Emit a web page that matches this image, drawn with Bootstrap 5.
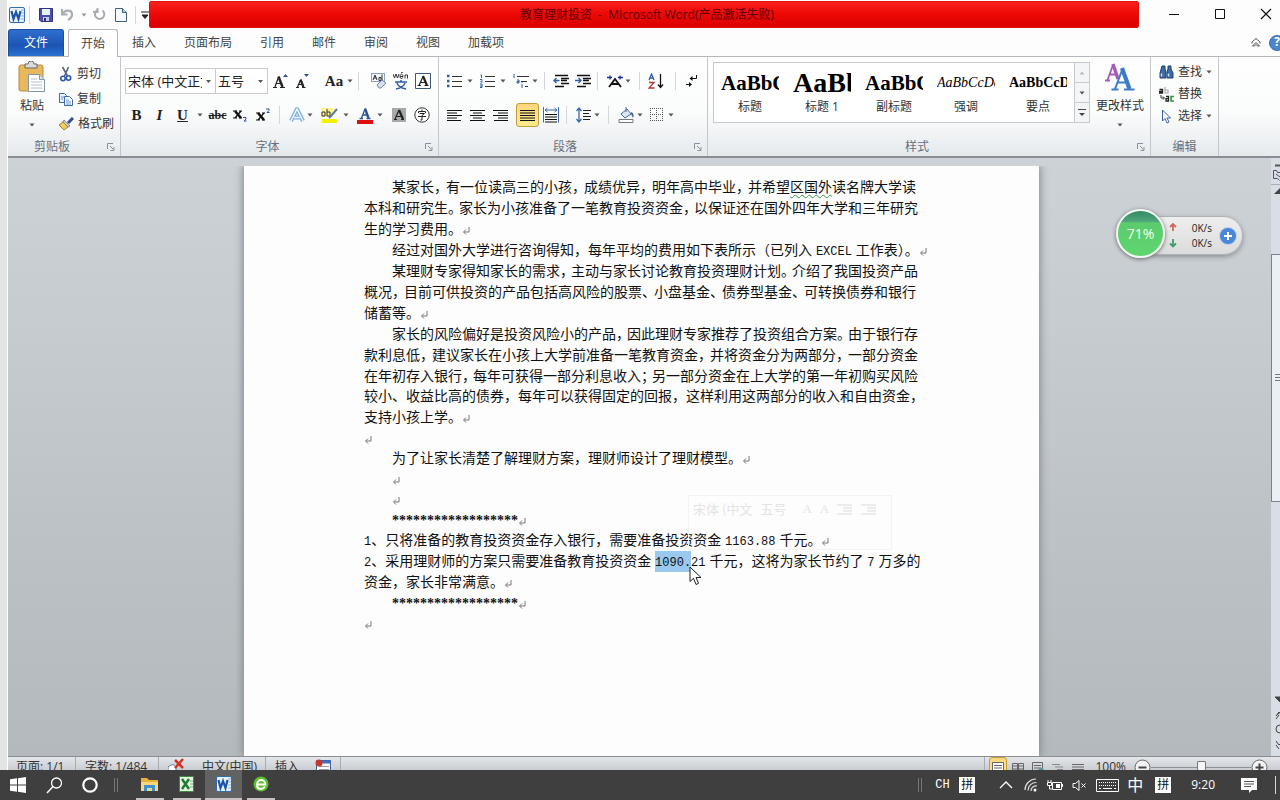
<!DOCTYPE html>
<html lang="zh-CN">
<head>
<meta charset="utf-8">
<meta name="viewport" content="width=device-width, initial-scale=1">
<title>教育理财投资 - Microsoft Word</title>
<link href="https://cdn.jsdelivr.net/npm/bootstrap@5.3.0/dist/css/bootstrap.min.css" rel="stylesheet">
<script src="https://cdn.jsdelivr.net/npm/bootstrap@5.3.0/dist/js/bootstrap.bundle.min.js" defer></script>
<style>
body{font:12px/16px "Open Sans","Noto Sans CJK SC",sans-serif;color:#333;background:#e3e5e5}
button{font:inherit;color:inherit;background:none;border:0;padding:0}
svg{display:block;flex:none}
.word-win{margin-left:7px;border-left:1px solid #fff;background:#fdfdfd;min-height:0}
.title-bar{height:29px}
.qat{width:141px;padding-left:1px}
.q24{width:22px;height:24px}
.q16{width:16px;height:24px}
.banner{height:27px;margin-top:1px;padding-left:6px;background:linear-gradient(#f8201c,#ee0a06 45%,#d90000);border:1px solid #e0100c;border-radius:2px;color:#5c0000;white-space:pre;line-height:26px}
.win-ctl{width:141px;padding-left:12px}
.win-ctl button{width:46px;height:28px;flex:none}
.tab-row{height:28px;border-bottom:1px solid #b4b8bc;color:#444}
.tab-row button{padding:0 14px;height:27px}
.tab-row .file-tab{padding:0;width:56px;margin-right:4px;color:#fff;background:linear-gradient(#2f6fcf,#1c54b4 60%,#2c72d2);border:1px solid #1c4ea0;border-bottom:0;border-radius:3px 3px 0 0}
.tab-row .home-tab{padding:0;width:50px;height:28px;background:#fff;border:1px solid #b4b8bc;border-bottom:0;border-radius:3px 3px 0 0}
.help-dot{width:16px;height:16px;border-radius:8px;background:#4a86cf;color:#fff;font-weight:700;margin-right:-5px;border:1px solid #3a6db0}
.ribbon{height:101px;background:linear-gradient(#fefefe,#fbfcfc 55%,#e6eaed);border-bottom:2px solid #8a8e94}
.grp{border-right:1px solid #c3c7cb}
.grp-clip{width:113px}.grp-font{width:318px}.grp-para{width:269px}.grp-style{width:443px}.grp-edit{width:68px}
.grp-name{height:18px;color:#67707c;position:relative;text-align:center;line-height:18px}
.launch{position:absolute;right:5px;top:5px}
.grp-body{height:81px}
.row-a{padding-top:12px;height:36px}
.row-b{margin-top:10px;height:24px}
.b12{width:12px;height:24px}.b22{width:22px;height:24px}.b24{width:23px;height:24px}
.b32{width:32px;height:24px;padding-left:4px;gap:2px}
.b34{width:34px;height:24px;padding-left:4px;gap:4px}
.vsep{width:1px;height:18px;background:#d3d6da;margin:0 5px 0 4px;flex:none}
.combo{appearance:none;height:26px;border:1px solid #c8ccd0;background:#fff url("data:image/svg+xml,%3Csvg xmlns='http://www.w3.org/2000/svg' width='5' height='3'%3E%3Cpath d='M0 0h5L2.5 3z' fill='%23555'/%3E%3C/svg%3E") no-repeat right 4px center;padding:0 13px 0 2px;font:inherit;font-size:13px;color:#222;border-radius:0}
.combo-face{width:91px}.combo-size{width:54px;margin-left:-1px;margin-right:2px}
.on{background:linear-gradient(#fbd77c,#ffe98f);border:1px solid #c29b3c;border-radius:3px}
.serif{font-family:"Liberation Serif",serif}
.glyph{font:700 15px/20px "Liberation Serif",serif;color:#222}
.glyph-sm{font-size:12px}
.gallery{width:377px;height:61px;margin:5px 0 0 5px;border:1px solid #c6cacd;background:#fff}
.gal-item{width:72px;padding:0 7px 7px;height:59px;color:#333}
.gal-item .demo{display:block;height:36px;overflow:hidden;white-space:nowrap;color:#000;font-family:"Liberation Serif",serif;font-weight:700;text-align:left;line-height:40px}
.d-md{font-size:21px}.d-lg{font-size:28px}.d-it{font-size:14px;font-style:italic}.gal-item .d-it{font-weight:400}.d-sm{font-size:14px}
.gal-scroll{width:15px;border-left:1px solid #c6cacd}
.gal-scroll button{height:20px;border-bottom:1px solid #c6cacd;background:#f4f5f6}
.gal-scroll button:last-child{border:0;height:19px}
.big-btn{line-height:18px;gap:4px}
.change-btn{width:60px}
.paste-btn{width:46px;margin-left:1px}
.list-btn{height:25px;gap:4px}
.find-btn{height:22px;gap:4px}
.workspace{min-height:0;background:linear-gradient(#ccd2d6,#c6cbd0 30%,#bcc1c5 65%,#b3b9bc)}
.doc-area{padding:8px 0 0 4px;min-height:0;overflow:hidden}
.sheet{width:795px;margin:0 auto;background:#fdfdfd;box-shadow:0 0 8px 1px #7f858a;padding:11px 120px;color:#111;font:14px/21px "Liberation Sans","Noto Sans CJK SC",sans-serif;clip-path:inset(0 -12px)}
.sheet p{margin:0;white-space:nowrap}
.ind{padding-left:28px}
.sheet .short{line-height:20px}
.p3,.p2,.p7{font-feature-settings:"halt"}
.p3{margin-right:4px}.p2{margin-right:5px}
.num{font:12px/12px "Liberation Mono",monospace}
.stars{font:700 14px/14px "Liberation Serif",serif}
.ret,.ret0{display:inline-block;vertical-align:-1px}
.wavy{text-decoration:underline wavy #3a9a4a 1px;text-underline-offset:2px}
.picked{position:relative;display:inline-block;background:#99c9ef;height:21px;vertical-align:top}
.pointer{position:absolute;left:34px;top:15px}
.mini-bar{position:absolute;left:33px;top:-56px;width:204px;height:55px;border:1px solid #f3f3f3;color:#e4e4e4;font:13px/26px "Noto Sans CJK SC",sans-serif}
.scroll-col{width:9px;overflow:hidden;background:#d8dee5}
.thumb{height:248px;background:#eaf0f5;border:1px solid #7c828a;border-right:0}
.speed{position:absolute;right:37px;top:209px;width:127px;height:50px}
.pill{position:absolute;left:24px;top:7px;width:103px;height:39px;border-radius:20px;background:linear-gradient(#eee,#dcdcdc);border:1px solid #aeb2b5;box-shadow:0 2px 5px #8d9296;padding:0 6px 0 28px;color:#222;font:10px/15px "Open Sans",sans-serif}
.ball{position:absolute;left:0;top:0;width:49px;height:49px;border-radius:25px;border:2px solid #f2f7f3;background:linear-gradient(#2f8a63,#53a77c 24%,#5bcb6c 26%,#5fd670);box-shadow:0 1px 4px #666;color:#f2fff2;font-size:14px}
.plus{width:16px;height:16px;border-radius:8px;background:#4a87d8;box-shadow:0 0 0 1px #b9cfea}
.status{height:14px;overflow:hidden;border-top:1px solid #8a8e94;background:linear-gradient(#e4e7ea,#c9cdd2);line-height:20px;color:#333}
.status>div{height:20px}
.status .cell{border-right:1px solid #a9adb2;padding:0 9px;height:20px;white-space:nowrap}
.cell.first{width:68px;padding-left:8px;padding-right:0}
.cell.words{width:83px;padding-right:0}
.cell.lang{width:107px;gap:17px}
.cell.ins{width:75px;gap:16px;padding-right:0}
.views{gap:2px;border-left:1px solid #a9adb2;padding-left:4px}
.views button{width:18px;height:20px;padding-top:3px}
.views .on{border-radius:3px 3px 0 0}
.zoom{appearance:none;width:100px;height:18px;margin:0;background:linear-gradient(#8b9096,#8b9096) no-repeat center/100% 1px}
.zoom::-webkit-slider-thumb{appearance:none;width:9px;height:12px;background:#f6f6f6;border:1px solid #777;border-radius:1px 1px 4px 4px}
.taskbar{height:30px;background:#3f3f3f;color:#fff}
.taskbar button{height:30px}
.app{width:37px;border-bottom:2px solid transparent;padding:0 4px;position:relative}
.app::after{content:"";position:absolute;left:5px;right:4px;bottom:-2px;height:2px;background:#c9c1c1}
.app.cur{background:#626262}.app.cur::after{left:0;right:0}
.tsep{margin:0 12px 0 5px}
.ime{width:16px;height:16px;background:#fff;color:#111;font-size:12px;line-height:15px;text-align:center}
.t24{width:24px}.t28{width:28px}.t32{width:32px}.t36{width:36px}
.clock{font:12px/30px "Open Sans",sans-serif}
</style>
</head>
<body class="vh-100 d-flex flex-column overflow-hidden">
<svg width="0" height="0" class="position-absolute" aria-hidden="true">
<symbol id="dn" viewBox="0 0 6 4"><path d="M.5.5h5L3 3.5z" fill="#555"/></symbol>
<symbol id="ret" viewBox="0 0 8 8"><path d="M7 0v5H2M4 2.500L1.500 5L4 7.500" fill="none" stroke="#777"/></symbol>
<symbol id="lau" viewBox="0 0 8 8"><path d="M.5 6V.5H6M3 3l3.500 3.500M7 4v3.500H3.500" fill="none" stroke="#8a9099"/></symbol>
<symbol id="wlogo" viewBox="0 0 16 16"><rect x=".5" y=".5" width="15" height="15" rx="1.500" fill="#e9f2fb" stroke="#2f6db4"/><path d="M12 3h3M12.500 6H15M12 9h3M12 12h3" stroke="#8fb3dc"/><path d="M2.500 4l2 8 2.500-7 2.500 7 2-8" fill="none" stroke="#1c55a5" stroke-width="2.200"/></symbol>
</svg>

<main class="word-win flex-grow-1 d-flex flex-column position-relative">
<header class="title-bar d-flex">
  <div class="qat d-flex align-items-center">
    <svg width="16" height="16"><use href="#wlogo"/></svg><span class="vsep"></span>
    <button class="q24 d-flex align-items-center justify-content-center" aria-label="保存"><svg width="14" height="14" viewBox="0 0 14 14"><path d="M.5.5h13v13H2L.5 12z" fill="#4a4fb0" stroke="#2f3184"/><path d="M3 1h8v6H3z" fill="#e8f1f8"/><path d="M4 9h6v4H4z" fill="#c9cde8"/><path d="M5 10h2v3H5z" fill="#2f3184"/></svg></button>
    <button class="q16 d-flex align-items-center ms-1" aria-label="撤消"><svg width="13" height="13" viewBox="0 0 13 13"><path d="M1 1v5.500h5.500M1.500 6C4 1.500 11 1.500 11 6.500c0 3-2 4.500-4 5.500" fill="none" stroke="#a9adb2" stroke-width="2.200"/></svg></button>
    <button class="b12 ms-1" aria-label="撤消列表"><svg width="6" height="4" opacity=".6"><use href="#dn"/></svg></button>
    <button class="q24 d-flex align-items-center" aria-label="重复"><svg width="13" height="13" viewBox="0 0 13 13"><path d="M3.500 2.500A4.700 4.700 0 1 0 9 2.300M8.500 0v4H13" fill="none" stroke="#a9adb2" stroke-width="2" transform="matrix(-1 0 0 1 13 0)"/></svg></button>
    <button aria-label="新建" class="me-2"><svg width="12" height="14" viewBox="0 0 12 14"><path d="M.5.5h7l4 4v9H.5z" fill="#f3f9fe" stroke="#44607e"/><path d="M7.500.5v4h4" fill="#b9d3ea" stroke="#44607e"/></svg></button>
    <span class="vsep ms-0"></span>
    <button aria-label="自定义快速访问工具栏"><svg width="8" height="8" viewBox="0 0 8 8"><path d="M0 1h8M1 4h6L4 7.500z" stroke="#222" fill="#222" stroke-width="1"/></svg></button>
  </div>
  <div class="banner flex-grow-1 text-center">教育理财投资  -  Microsoft Word(产品激活失败)</div>
  <div class="win-ctl d-flex">
    <button aria-label="最小化"><svg class="mx-auto" width="12" height="12"><path d="M1 6.500h10" stroke="#111"/></svg></button>
    <button aria-label="最大化"><svg class="mx-auto" width="12" height="12"><path d="M1.500 1.500h9v9h-9z" fill="none" stroke="#111"/></svg></button>
    <button aria-label="关闭"><svg class="mx-auto" width="12" height="12"><path d="M1 1l10 10M11 1L1 11" stroke="#111" stroke-width="1.200"/></svg></button>
  </div>
</header>

<nav class="tab-row d-flex">
  <button class="file-tab">文件</button><button class="home-tab">开始</button><button>插入</button><button>页面布局</button><button>引用</button><button>邮件</button><button>审阅</button><button>视图</button><button>加载项</button>
  <div class="ms-auto d-flex align-items-center gap-2">
    <svg width="10" height="9" viewBox="0 0 10 9"><path d="M1 5.500V4l4-3.500L9 4v1.500M1.500 8L5 4.500 8.500 8H6.500L5 6.500 3.500 8z" fill="none" stroke="#555"/></svg>
    <div class="help-dot text-center lh-1">?</div>
  </div>
</nav>

<section class="ribbon d-flex">
  <div class="grp grp-clip">
    <div class="grp-body d-flex">
      <button class="paste-btn big-btn d-flex flex-column align-items-center pt-1"><svg width="28" height="32" viewBox="0 0 28 32"><rect x="1" y="4" width="24" height="26" rx="2" fill="#e9b85c" stroke="#b98a3a"/><path d="M7 3h3a3 3 0 0 1 6 0h3v4H7z" fill="#d8dbe0" stroke="#666"/><path d="M10.500 13.500h11l5 5v12h-16z" fill="#fff" stroke="#8496a8"/><path d="M21.500 13.500v5h5" fill="#cfe0f0" stroke="#8496a8"/><path d="M13 18h6M13 21h11M13 24h11M13 27h11" stroke="#b4bcc8"/></svg><span>粘贴</span><svg class="mt-1" width="6" height="4"><use href="#dn"/></svg></button>
      <div class="d-flex flex-column pt-1 ms-1">
        <button class="list-btn d-flex align-items-center"><svg width="14" height="16" viewBox="0 0 14 16"><path d="M3.500 1l5 9M9.500 1l-4 9" stroke="#56657a" stroke-width="1.600"/><circle cx="4" cy="12.500" r="2.200" fill="none" stroke="#2b59ab" stroke-width="1.600"/><circle cx="9.500" cy="12" r="2.200" fill="none" stroke="#2b59ab" stroke-width="1.600"/></svg>剪切</button>
        <button class="list-btn d-flex align-items-center"><svg width="14" height="14" viewBox="0 0 14 14"><path d="M.5 1.500h5l2 2v7h-7z" fill="#e6f0fa" stroke="#3f69ad"/><path d="M5.500 4.500h5l3 3v6h-8z" fill="#fff" stroke="#3f69ad"/><path d="M7 8h3M7 10h5M7 12h5M2 5h3M2 7h2" stroke="#6d93c8"/></svg>复制</button>
        <button class="list-btn d-flex align-items-center"><svg width="15" height="14" viewBox="0 0 15 14"><path d="M14 1L9 6" stroke="#3b4c80" stroke-width="3"/><path d="M5 3l6 6-2 1-5-5z" fill="#c9cdd5" stroke="#555" stroke-width=".6"/><path d="M4 5l5 5-4 3L0 8z" fill="#f0cd62" stroke="#a98521"/></svg>格式刷</button>
      </div>
    </div>
    <div class="grp-name pe-4">剪贴板<svg class="launch" width="8" height="8"><use href="#lau"/></svg></div>
  </div>

  <div class="grp grp-font">
    <div class="grp-body px-1">
      <div class="row-a d-flex align-items-center">
        <select class="combo combo-face" aria-label="字体"><option>宋体 (中文正文)</option></select>
        <select class="combo combo-size" aria-label="字号"><option>五号</option></select>
        <button class="b24 d-flex align-items-center justify-content-center" aria-label="增大字体"><svg width="16" height="17" viewBox="0 0 16 17"><path d="M5.500 3.500L9.500 14" stroke="#222" stroke-width="2.400"/><path d="M2 14L5.500 4M3 10.500h5M0 14.500h4M7 14.500h5" fill="none" stroke="#222" stroke-width="1.200"/><path d="M10 4h5l-2.500-3z" fill="#2c4f95"/></svg></button>
        <button class="b22 d-flex align-items-center justify-content-center" aria-label="缩小字体"><svg width="15" height="17" viewBox="0 0 15 17"><path d="M5.500 6.500L8.500 14" stroke="#222" stroke-width="2.200"/><path d="M2.500 14L5.500 7M3.500 11.500h4M1 14.500h3M7 14.500h3.500" fill="none" stroke="#222" stroke-width="1.200"/><path d="M9 1h5l-2.500 3z" fill="#2c4f95"/></svg></button>
        <button class="b34 d-flex align-items-center ms-2 ps-1 gap-1" aria-label="更改大小写"><span class="glyph">Aa</span><svg width="6" height="4"><use href="#dn"/></svg></button>
        <span class="vsep"></span>
        <button class="b24 d-flex align-items-center justify-content-center ms-1" aria-label="清除格式"><svg width="16" height="16" viewBox="0 0 16 16"><rect x=".5" y=".5" width="13" height="8" fill="#f1f5fa" stroke="#8fa3c0"/><path d="M2 7l2-5 2 5M3 5h2.500M8 4.500h2v3H8zM11 1.500v6" fill="none" stroke="#333"/><path d="M6 12l5-5 4 3-5 5H8z" fill="#d5deea" stroke="#6d86ab"/></svg></button>
        <button class="b24 d-flex align-items-center justify-content-center" aria-label="拼音指南"><svg width="16" height="18" viewBox="0 0 16 18"><path d="M0 2l1.500 4L3 2l1.500 4L6 2M7 4.500h3c0-3-3-3-3 0s2 2 3 1M12 6.500V3h2.500v3.500M8 1l2-1" fill="none" stroke="#333"/><path d="M2 10h12M8 8v2M4 11c1 3 4 5 9 6M12 11c-1 3-4 5-9 6" fill="none" stroke="#2f5ca8" stroke-width="1.500"/></svg></button>
        <button class="b24 d-flex align-items-center justify-content-center" aria-label="字符边框"><svg width="16" height="16" viewBox="0 0 16 16"><path d="M.5.500h15v15H.5z" fill="#fff" stroke="#3d5577"/><path d="M8 3l4 9.500" stroke="#222" stroke-width="2.200"/><path d="M4 12.500L8 3.500M5.500 9.500h5M2.500 12.500h3.500M9.500 12.500h4" fill="none" stroke="#222" stroke-width="1.200"/></svg></button>
      </div>
      <div class="row-b d-flex align-items-center">
        <button class="b24 glyph">B</button><button class="b24 glyph fst-italic">I</button><button class="b24 glyph text-decoration-underline">U</button>
        <button class="b12" aria-label="下划线样式"><svg class="mx-auto" width="6" height="4"><use href="#dn"/></svg></button>
        <button class="b24 glyph glyph-sm text-decoration-line-through">abc</button>
        <button class="b24" aria-label="下标"><svg class="mx-auto" width="15" height="14" viewBox="0 0 15 14"><path d="M2 3l6 7" stroke="#111" stroke-width="2.600"/><path d="M8 3l-6 7M0 3h4M6 3h3M0 10h4M6 10h3" stroke="#111" stroke-width="1.200"/><path d="M10 9.500h3v1.500l-2 2h2.500" fill="none" stroke="#2c4f95"/></svg></button>
        <button class="b24" aria-label="上标"><svg class="mx-auto" width="15" height="14" viewBox="0 0 15 14"><path d="M2 5l6 7" stroke="#111" stroke-width="2.600"/><path d="M8 5l-6 7M0 5h4M6 5h3M0 12h4M6 12h3" stroke="#111" stroke-width="1.200"/><path d="M10 1h3v1.500l-2 2h2.500" fill="none" stroke="#2c4f95"/></svg></button>
        <span class="vsep"></span>
        <button class="b32 d-flex align-items-center" aria-label="文本效果"><svg width="16" height="16" viewBox="0 0 16 16"><path d="M2 14L8 2l6 12M5 10.500h6" fill="none" stroke="#7fb0dd" stroke-width="4" stroke-linejoin="round"/><path d="M2 14L8 2l6 12M5 10.500h6" fill="none" stroke="#eaf5fd" stroke-width="1.600"/></svg><svg width="6" height="4"><use href="#dn"/></svg></button>
        <button class="b32 d-flex align-items-center ps-0 gap-1 ms-1" aria-label="突出显示"><svg width="18" height="16" viewBox="0 0 18 16"><path d="M0 1h12v9H0z" fill="#fbf58a"/><path d="M1 8V5h3v4H1zM6 2v7h3V5H6" fill="none" stroke="#333"/><path d="M16 2l-6 7-2 2" fill="none" stroke="#5b79b4" stroke-width="2"/><path d="M1 12h15v4H1z" fill="#f6f000"/></svg><svg width="6" height="4"><use href="#dn"/></svg></button>
        <button class="b34 d-flex align-items-center" aria-label="字体颜色"><svg width="16" height="17" viewBox="0 0 16 17"><path d="M8 1.500L11.500 11" stroke="#2f539b" stroke-width="2.400"/><path d="M4.500 11L8 2M5.500 8h5M2.500 11.500h3.500M9.500 11.500h4" fill="none" stroke="#2f539b" stroke-width="1.300"/><path d="M0 13h16v4H0z" fill="#dc1010"/></svg><svg width="6" height="4"><use href="#dn"/></svg></button>
        <button class="b24" aria-label="字符底纹"><svg class="mx-auto" width="14" height="14" viewBox="0 0 14 14"><path d="M0 0h14v14H0z" fill="#a9a9a9"/><path d="M7 2l4 9" stroke="#222" stroke-width="2.200"/><path d="M3 11l4-9M4.500 8.500h5M2 11.500h3M9 11.500h3" fill="none" stroke="#222" stroke-width="1.200"/></svg></button>
        <button class="b24" aria-label="带圈字符"><svg class="mx-auto" width="16" height="16" viewBox="0 0 16 16"><circle cx="8" cy="8" r="7.200" fill="#fff" stroke="#333"/><path d="M8 2.500v1.500M4.500 6V4.500h7V6M5.500 6.500h5L8 8.500v4.500H6.500M4 9.500h8" fill="none" stroke="#222"/></svg></button>
      </div>
    </div>
    <div class="grp-name pe-4">字体<svg class="launch" width="8" height="8"><use href="#lau"/></svg></div>
  </div>

  <div class="grp grp-para">
    <div class="grp-body px-1">
      <div class="row-a d-flex align-items-center">
        <button class="b34 d-flex align-items-center" aria-label="项目符号"><svg width="16" height="14" viewBox="0 0 16 14"><path d="M0 2h2.500M0 7h2.500M0 12h2.500" stroke="#2f5ca8" stroke-width="2.400"/><path d="M5 2.500h10M5 7.500h10M5 12.500h10" stroke="#333"/></svg><svg width="6" height="4"><use href="#dn"/></svg></button>
        <button class="b34 d-flex align-items-center" aria-label="编号"><svg width="16" height="14" viewBox="0 0 16 14"><path d="M.5 1h1v3M0 5.500h2v1L.5 8H2.500M0 10h2v3.500H0M0 12h2" fill="none" stroke="#2f5ca8"/><path d="M5 2.500h10M5 7.500h10M5 12.500h10" stroke="#333"/></svg><svg width="6" height="4"><use href="#dn"/></svg></button>
        <button class="b32 d-flex align-items-center" aria-label="多级列表"><svg width="17" height="15" viewBox="0 0 17 15"><path d="M1 0v4M4 6h2v3H4V7.500h2M9 10v4M9 8v1" fill="none" stroke="#2f5ca8"/><path d="M4 2.500h12M8 7.500h6M12 12.500h3" stroke="#333"/></svg><svg width="6" height="4"><use href="#dn"/></svg></button>
        <span class="vsep"></span>
        <button class="b24" aria-label="减少缩进"><svg class="mx-auto" width="16" height="14" viewBox="0 0 16 14"><path d="M2 1.500h13M8 4.500h8M8 6.500h6M8 9.500h8M2 12.500h9" stroke="#111" stroke-width="1.500"/><path d="M6.500 6.500H1M3.500 4L1 6.500 3.500 9" fill="none" stroke="#2f5ca8" stroke-width="1.400"/></svg></button>
        <button class="b22" aria-label="增加缩进"><svg class="mx-auto" width="16" height="14" viewBox="0 0 16 14"><path d="M2 1.500h13M8 4.500h8M8 6.500h6M8 9.500h8M2 12.500h9" stroke="#111" stroke-width="1.500"/><path d="M0 6.500h5.500M3.500 4L6 6.500 3.500 9" fill="none" stroke="#2f5ca8" stroke-width="1.400"/></svg></button>
        <span class="vsep"></span>
        <button class="b32 d-flex align-items-center" aria-label="中文版式"><svg width="16" height="14" viewBox="0 0 16 14"><path d="M2 13l6-8 6 8M4.500 10h7" fill="none" stroke="#111" stroke-width="1.800"/><path d="M0 3.500h5M11 3.500h5M3 1.500v4M13 1.500v4" stroke="#1c2d8c" stroke-width="1.300"/></svg><svg width="6" height="4"><use href="#dn"/></svg></button>
        <span class="vsep"></span>
        <button class="b24" aria-label="排序"><svg class="mx-auto" width="16" height="16" viewBox="0 0 16 16"><path d="M1 7l2.500-6L6 7M2 5h3" fill="none" stroke="#2f5ca8" stroke-width="1.300"/><path d="M1 9.500h5l-5 5.500h5.500" fill="none" stroke="#b3353a" stroke-width="1.300"/><path d="M12.500 1v13M10 11.500l2.500 3 2.500-3" fill="none" stroke="#111" stroke-width="1.300"/></svg></button>
        <span class="vsep ms-2"></span>
        <button class="b24" aria-label="显示编辑标记"><svg class="mx-auto" width="12" height="13" viewBox="0 0 12 13"><path d="M10.500 0v3.500H6M0 9.500h3" fill="none" stroke="#111"/><path d="M3.500 3.500L6.500 1v5zM6 9.500L3 7v5z" fill="#111"/></svg></button>
      </div>
      <div class="row-b d-flex align-items-center">
        <button class="b24" aria-label="左对齐"><svg class="mx-auto" width="15" height="13"><path d="M0 1.500h15M0 4h10M0 6.500h15M0 9h10M0 11.500h14" stroke="#111" stroke-width="1.200"/></svg></button>
        <button class="b24" aria-label="居中"><svg class="mx-auto" width="15" height="13"><path d="M0 1.500h15M3 4h9M0 6.500h15M3 9h9M0 11.500h15" stroke="#111" stroke-width="1.200"/></svg></button>
        <button class="b24" aria-label="右对齐"><svg class="mx-auto" width="15" height="13"><path d="M0 1.500h15M5 4h10M0 6.500h15M5 9h10M1 11.500h14" stroke="#111" stroke-width="1.200"/></svg></button>
        <button class="b24 on ms-1" aria-label="两端对齐"><svg class="mx-auto" width="15" height="13"><path d="M0 1.500h15M0 4h15M0 6.500h15M0 9h15M0 11.500h15" stroke="#111" stroke-width="1.200"/></svg></button>
        <button class="b24" aria-label="分散对齐"><svg class="mx-auto" width="16" height="16" viewBox="0 0 16 16"><path d="M.5 0v15.500M15.500 0v15.500M2 3h12M4.500 1L2 3l2.500 2M11.500 1L14 3l-2.500 2" fill="none" stroke="#3b68b3"/><path d="M2 7.500h12M2 10h12M2 12.500h12M2 15h12" stroke="#111"/></svg></button>
        <span class="vsep"></span>
        <button class="b32 d-flex align-items-center" aria-label="行距"><svg width="16" height="16" viewBox="0 0 16 16"><path d="M3 1v14M.500 4L3 1l2.500 3M.5 12L3 15l2.500-3" fill="none" stroke="#3b68b3" stroke-width="1.300"/><path d="M7 3.500h8M7 6.500h6M7 9.500h8M7 12.500h7" stroke="#222"/></svg><svg width="6" height="4"><use href="#dn"/></svg></button>
        <span class="vsep"></span>
        <button class="b32 d-flex align-items-center" aria-label="底纹"><svg width="17" height="16" viewBox="0 0 17 16"><path d="M3 7l6-5 4 5-6 4z" fill="#dce7f3" stroke="#4a678f"/><path d="M8 0v5" stroke="#4a678f"/><path d="M13 5c3 1 3 4 2 6l-2-4z" fill="#3b68b3"/><path d="M1 12.500h14v3H1z" fill="#fff" stroke="#777"/></svg><svg width="6" height="4"><use href="#dn"/></svg></button>
        <button class="b34 d-flex align-items-center" aria-label="边框"><svg width="14" height="14" viewBox="0 0 14 14"><path d="M.5 0v13M6.500 0v13M12.500 0v13M0 .5h13M0 6.500h13M0 12.500h13" stroke="#555" stroke-dasharray="1 1"/></svg><svg width="6" height="4"><use href="#dn"/></svg></button>
      </div>
    </div>
    <div class="grp-name pe-3">段落<svg class="launch" width="8" height="8"><use href="#lau"/></svg></div>
  </div>

  <div class="grp grp-style">
    <div class="grp-body d-flex">
      <div class="gallery d-flex">
        <button class="gal-item"><span class="demo d-md">AaBbC</span>标题</button>
        <button class="gal-item"><span class="demo d-lg">AaBb</span>标题 1</button>
        <button class="gal-item"><span class="demo d-md">AaBbC</span>副标题</button>
        <button class="gal-item"><span class="demo d-it">AaBbCcDd</span>强调</button>
        <button class="gal-item"><span class="demo d-sm">AaBbCcD</span>要点</button>
        <div class="gal-scroll d-flex flex-column">
          <button aria-label="上一行"><svg class="mx-auto" width="6" height="4" viewBox="0 0 6 4"><path d="M.5 3.500h5L3 .5z" fill="#bbb"/></svg></button>
          <button aria-label="下一行"><svg class="mx-auto" width="6" height="4"><use href="#dn"/></svg></button>
          <button aria-label="其他"><svg class="mx-auto" width="8" height="8" viewBox="0 0 8 8"><path d="M0 .5h8" stroke="#444"/><path d="M1 4h6L4 7z" fill="#444"/></svg></button>
        </div>
      </div>
      <button class="change-btn big-btn d-flex flex-column align-items-center pt-1"><svg width="30" height="32" viewBox="0 0 30 32"><path d="M8 3l5 15" stroke="#a45bb8" stroke-width="3.400"/><path d="M2.500 19L8 4M4.500 13.500h7M0 19.500h5" fill="none" stroke="#a45bb8" stroke-width="1.800"/><path d="M17 7l7.500 21" stroke="#3f7cc6" stroke-width="4.200"/><path d="M10 28L17.500 8M12.500 21.500h10M6.500 28.500h7M19 28.500h10.500" fill="none" stroke="#3f7cc6" stroke-width="2"/></svg><span>更改样式</span><svg class="mt-1" width="6" height="4"><use href="#dn"/></svg></button>
    </div>
    <div class="grp-name pe-4">样式<svg class="launch" width="8" height="8"><use href="#lau"/></svg></div>
  </div>

  <div class="grp grp-edit">
    <div class="grp-body d-flex flex-column ps-2 pt-1">
      <button class="find-btn d-flex align-items-center"><svg width="15" height="14" viewBox="0 0 15 14"><path d="M3 1h3v3l1 3v6H1V8zM9 1h3v3l2 4v5H8V7l1-3z" fill="#3e6aa8" stroke="#20426f"/><path d="M2.500 8.500v3M9.500 8.500v3" stroke="#cfe0f2" stroke-width="1.500"/></svg>查找<svg width="6" height="4"><use href="#dn"/></svg></button>
      <button class="find-btn d-flex align-items-center"><svg width="15" height="15" viewBox="0 0 15 15"><path d="M.5 2.500h3V6h-3V4.500h3" fill="none" stroke="#222" stroke-width="1.300"/><path d="M6 0v6h3V3H6" fill="none" stroke="#aaa" stroke-width="1.200"/><path d="M2 8v3h3M4 9.500l1.500 1.500L4 12.500" fill="none" stroke="#333"/><path d="M7 9.500h2.500V14H7v-2.300h2.500" fill="none" stroke="#222" stroke-width="1.300"/><path d="M15 9.500h-3V14h3" fill="none" stroke="#2a9a3c" stroke-width="1.600"/></svg>替换</button>
      <button class="find-btn d-flex align-items-center"><svg width="15" height="15" viewBox="0 0 15 15"><path d="M3.500 1v11l2.500-2.500L8 14l2-1-2-4h3.500z" fill="#fff" stroke="#3f5fa0"/></svg>选择<svg width="6" height="4"><use href="#dn"/></svg></button>
    </div>
    <div class="grp-name">编辑</div>
  </div>
</section>

<section class="workspace flex-grow-1 d-flex">
  <div class="doc-area flex-grow-1 d-flex">
    <article class="sheet">
      <p class="ind">某家长<span class="p2">，</span>有一位读高三的小孩<span class="p2">，</span>成绩优异<span class="p2">，</span>明年高中毕业<span class="p2">，</span>并希望<span class="wavy">区国外</span>读名牌大学读</p>
      <p>本科和研究生<span class="p3">。</span>家长为小孩准备了一笔教育投资资金<span class="p3">，</span>以保证还在国外四年大学和三年研究</p>
      <p>生的学习费用。<svg class="ret" width="8" height="8"><use href="#ret"/></svg></p>
      <p class="ind">经过对国外大学进行咨询得知，每年平均的费用如下表所示（已列入 <span class="num">EXCEL</span> 工作表<span class="p7">）</span>。<svg class="ret" width="8" height="8"><use href="#ret"/></svg></p>
      <p class="ind">某理财专家得知家长的需求<span class="p3">，</span>主动与家长讨论教育投资理财计划<span class="p3">。</span>介绍了我国投资产品</p>
      <p>概况<span class="p2">，</span>目前可供投资的产品包括高风险的股票<span class="p2">、</span>小盘基金<span class="p2">、</span>债券型基金<span class="p2">、</span>可转换债券和银行</p>
      <p>储蓄等。<svg class="ret" width="8" height="8"><use href="#ret"/></svg></p>
      <p class="ind">家长的风险偏好是投资风险小的产品<span class="p3">，</span>因此理财专家推荐了投资组合方案<span class="p3">。</span>由于银行存</p>
      <p>款利息低<span class="p2">，</span>建议家长在小孩上大学前准备一笔教育资金<span class="p2">，</span>并将资金分为两部分<span class="p2">，</span>一部分资金</p>
      <p class="short">在年初存入银行<span class="p3">，</span>每年可获得一部分利息收入<span class="p3">；</span>另一部分资金在上大学的第一年初购买风险</p>
      <p>较小、收益比高的债券，每年可以获得固定的回报，这样利用这两部分的收入和自由资金<span class="p7">，</span></p>
      <p>支持小孩上学。<svg class="ret" width="8" height="8"><use href="#ret"/></svg></p>
      <p class="short"><svg class="ret0" width="8" height="8"><use href="#ret"/></svg></p>
      <p class="ind">为了让家长清楚了解理财方案，理财师设计了理财模型。<svg class="ret" width="8" height="8"><use href="#ret"/></svg></p>
      <p class="ind short"><svg class="ret0" width="8" height="8"><use href="#ret"/></svg></p>
      <p class="ind"><svg class="ret0" width="8" height="8"><use href="#ret"/></svg></p>
      <p class="ind short"><span class="stars">******************</span><svg class="ret0" width="8" height="8"><use href="#ret"/></svg></p>
      <p><span class="num">1</span>、只将准备的教育投资资金存入银行，需要准备投资资金 <span class="num">1163.88</span> 千元。<svg class="ret" width="8" height="8"><use href="#ret"/></svg></p>
      <p><span class="num">2</span>、采用理财师的方案只需要准备教育投资资金 <span class="picked"><span class="num">1090.</span><span class="mini-bar d-flex flex-column px-1"><span class="d-flex gap-2"><span>宋体 (中文</span><span>五号</span><span class="serif ms-2">A</span><span class="serif">A</span><svg class="mt-2" width="16" height="12"><path d="M0 1h15M6 4h9M6 7h9M0 10h15" stroke="#ececec" stroke-width="2"/></svg><svg class="mt-2" width="16" height="12"><path d="M0 1h15M6 4h9M6 7h9M0 10h15" stroke="#ececec" stroke-width="2"/></svg></span></span><svg class="pointer" width="13" height="20" viewBox="0 0 13 20"><path d="M1 1v14.500l3.500-3.200L7 18.500l2.500-1.200L7 11.500h5z" fill="#fff" stroke="#222"/></svg></span><span class="num">21</span> 千元，这将为家长节约了 <span class="num">7</span> 万多的</p>
      <p>资金，家长非常满意。<svg class="ret" width="8" height="8"><use href="#ret"/></svg></p>
      <p class="ind short"><span class="stars">******************</span><svg class="ret0" width="8" height="8"><use href="#ret"/></svg></p>
      <p><svg class="ret0" width="8" height="8"><use href="#ret"/></svg></p>
    </article>
  </div>
  <div class="scroll-col d-flex flex-column">
    <svg width="9" height="96" viewBox="0 0 9 96"><path d="M4 7.500h5" stroke="#555" stroke-width="2"/><path d="M2.500 12.500h3l1 2 3 0M2.500 12.500v8h4l2 2M5 16l4 3" fill="none" stroke="#5c4c66"/><path d="M0 26.500h9" stroke="#a9afb7"/><path d="M3 36h6v-6z" fill="#444"/></svg>
    <div class="thumb"><svg width="9" height="246"><path d="M3 119.500h6M3 122.500h6M3 125.500h6" stroke="#777"/></svg></div>
    <svg class="mt-auto" width="9" height="62" viewBox="0 0 9 62"><path d="M4 3h5v5zM5 22l3-4 1 1M5 25l3-4" fill="#444" stroke="#444"/><circle cx="9" cy="35" r="4" fill="none" stroke="#444"/><path d="M5 47l3 4 1-1M5 51l3 4" stroke="#444" fill="none"/></svg>
  </div>
</section>

<footer class="status d-flex">
  <div class="cell first">页面: 1/1</div>
  <div class="cell words">字数: 1/484</div>
  <div class="cell lang d-flex"><svg width="17" height="16" viewBox="0 0 17 16"><path d="M0 10c4-3 6-3 8 0v6c-2-2-5-2-8 0z" fill="#fff" stroke="#59709b"/><path d="M7 3l8 8M15 2L7 11" stroke="#d03027" stroke-width="2.500"/></svg>中文(中国)</div>
  <div class="cell ins d-flex">插入<svg width="16" height="18" viewBox="0 0 16 18"><path d="M1.500 3.500h14v13h-14z" fill="#fff" stroke="#3f5fa0"/><path d="M2 5h13" stroke="#3f6fc0" stroke-width="3"/><path d="M4 9.500h10M4 12.500h10" stroke="#99a"/><circle cx="4" cy="6" r="3.500" fill="#c8372d"/></svg></div>
  <div class="views d-flex ms-auto">
    <button class="on" aria-label="页面视图"><svg class="mx-auto" width="12" height="14"><path d="M.5.500h11v13H.5z" fill="#fff" stroke="#666"/><path d="M2 3.500h8M2 6h8M2 8.500h8" stroke="#666"/></svg></button>
    <button aria-label="阅读版式"><svg class="mx-auto" width="12" height="14"><path d="M.5 1.500h5v9h-5zM6.500 1.500h5v9h-5zM1 4h4M1 7h4M7 4h4M7 7h4" fill="none" stroke="#666"/></svg></button>
    <button aria-label="Web 版式"><svg class="mx-auto" width="12" height="14"><path d="M.5.500h10v12H.5zM2 3.500h7M2 6h7M2 8.500h7" fill="none" stroke="#666"/><circle cx="9" cy="9" r="3" fill="#4a9a9a"/></svg></button>
    <button aria-label="大纲视图"><svg class="mx-auto" width="12" height="14"><path d="M0 2.500h8M3 5h8M5 7.500h6M3 10h6" stroke="#888"/></svg></button>
    <button aria-label="草稿"><svg class="mx-auto" width="12" height="14"><path d="M0 2.500h12M0 5h12M0 7.500h12M0 10h10" stroke="#666"/></svg></button>
  </div>
  <button class="mx-2">100%</button>
  <div class="d-flex align-items-center pe-2">
    <button aria-label="缩小"><svg width="17" height="17"><circle cx="8.500" cy="8.500" r="7.500" fill="#f3f3f3" stroke="#666"/><path d="M4.500 8.500h8" stroke="#444" stroke-width="2"/></svg></button>
    <input type="range" class="zoom" aria-label="显示比例" min="0" max="200" value="100">
    <button class="me-1" aria-label="放大"><svg width="17" height="17"><circle cx="8.500" cy="8.500" r="7.500" fill="#f3f3f3" stroke="#666"/><path d="M4.500 8.500h8M8.500 4.500v8" stroke="#444" stroke-width="2"/></svg></button>
  </div>
</footer>

<aside class="speed">
  <div class="pill d-flex align-items-center">
    <svg width="8" height="26" viewBox="0 0 8 26"><path d="M4 8V1M1 4l3-3 3 3" fill="none" stroke="#d8685c" stroke-width="1.800"/><path d="M4 16v7M1 20.500l3 3 3-3" fill="none" stroke="#3f9d6a" stroke-width="1.800"/></svg>
    <div class="ms-auto me-2 text-end">0K/s<br>0K/s</div>
    <button class="plus d-flex align-items-center justify-content-center" aria-label="加速"><svg width="10" height="10"><path d="M5 1v8M1 5h8" stroke="#fff" stroke-width="2"/></svg></button>
  </div>
  <div class="ball d-flex align-items-center justify-content-center">71%</div>
</aside>
</main>

<footer class="taskbar d-flex align-items-center">
  <button class="t36" aria-label="开始"><svg class="mx-auto" width="16" height="16" viewBox="0 0 16 16"><path d="M0 2.300L7 1.300v6.200H0zM8 1.200L16 0v7.500H8zM0 8.500h7v6.200l-7-1zM8 8.500h8V16l-8-1.200z" fill="#fff"/></svg></button>
  <button class="t36" aria-label="搜索"><svg class="mx-auto" width="17" height="17" viewBox="0 0 17 17"><circle cx="10.500" cy="6" r="5" fill="none" stroke="#fff" stroke-width="1.300"/><path d="M7 9.500L1 16" stroke="#fff" stroke-width="1.500"/></svg></button>
  <button class="t36" aria-label="Cortana"><svg class="mx-auto" width="16" height="16"><circle cx="8" cy="8" r="6.700" fill="none" stroke="#fff" stroke-width="2.200"/></svg></button>
  <svg class="tsep" width="6" height="14"><path d="M1.500 0v14M4.500 0v14" stroke="#777"/></svg>
  <button class="app" aria-label="文件资源管理器"><svg class="mx-auto" width="17" height="15" viewBox="0 0 17 15"><path d="M0 1h6l2 2h9v11H0z" fill="#e9b13b"/><path d="M0 5h17v9H0z" fill="#f9d775"/><path d="M3 14V8h11v6h-3v-3H6v3z" fill="#3f8fd6"/></svg></button>
  <button class="app" aria-label="Excel"><svg class="mx-auto" width="15" height="16" viewBox="0 0 15 16"><path d="M.5.500h14v15H.5z" fill="#e4f3df" stroke="#3c8a3c"/><path d="M3 3l7 10M10 3L3 13" stroke="#1e7a2f" stroke-width="2.400"/><path d="M11 5h3M11 8h3M11 11h3" stroke="#7fb37f"/></svg></button>
  <button class="app cur" aria-label="Word"><svg class="mx-auto" width="16" height="16"><use href="#wlogo"/></svg></button>
  <button class="app" aria-label="浏览器"><svg class="mx-auto" width="16" height="16"><circle cx="8" cy="8" r="7.500" fill="#5cbf2a"/><path d="M4 8.500h8.300C12.500 2.500 4 2.500 4 8.500s6 5 8 2" fill="none" stroke="#fff" stroke-width="2"/></svg></button>

  <div class="ms-auto d-flex align-items-center">
    <svg class="tsep" width="6" height="14"><path d="M1.500 0v14M4.500 0v14" stroke="#777"/></svg>
    <span class="num t24">CH</span>
    <span class="ime me-3">拼</span>
    <button class="t28" aria-label="显示隐藏的图标"><svg width="14" height="8" class="ms-2"><path d="M1 7l6-6 6 6" fill="none" stroke="#fff" stroke-width="1.300"/></svg></button>
    <button class="t24" aria-label="网络"><svg class="mx-auto" width="14" height="14"><path d="M1 12A11 11 0 0 1 12 1M4 12.500A8 8 0 0 1 12.500 4.500M7 13a5 5 0 0 1 6-5" fill="none" stroke="#ddd" stroke-width="1.200"/><circle cx="11" cy="12" r="1.500" fill="#fff"/></svg></button>
    <button class="t24" aria-label="电池"><svg class="mx-auto" width="17" height="12"><path d="M5.500 3.500h9v7h-9zM15.500 5v3M1 1v2M4 1v2M.5 3.500h4v3h-4zM2.500 6v4H5" fill="none" stroke="#fff"/><path d="M9 5h4v4H9z" fill="#fff"/></svg></button>
    <button class="t24" aria-label="音量"><svg class="mx-auto" width="15" height="13"><path d="M1 4.500h2.500L7 1.500v10l-3.500-3H1zM9.500 4.500l4 4M13.500 4.500l-4 4" fill="none" stroke="#fff"/></svg></button>
    <button class="t32" aria-label="触摸键盘"><svg class="mx-auto" width="23" height="13"><path d="M.5.500h22v12H.5z" fill="none" stroke="#fff"/><path d="M3 3.500h17M3 6.500h17" stroke="#fff" stroke-dasharray="1 1"/><path d="M3 9.500h2M7 9.500h9M18 9.500h2" stroke="#fff"/></svg></button>
    <button class="t24 fs-6">中</button>
    <span class="ime ms-2 me-3">拼</span>
    <span class="clock ms-1">9:20</span>
    <button class="t36 ms-3" aria-label="通知"><svg class="mx-auto" width="16" height="17"><path d="M0 1h16v12h-5l-3 3v-3H0z" fill="#fff"/><path d="M3 4.500h10M3 7h10M3 9.500h7" stroke="#555"/></svg></button>
    <span class="vsep ms-2 me-1"></span>
  </div>
</footer>
</body>
</html>
